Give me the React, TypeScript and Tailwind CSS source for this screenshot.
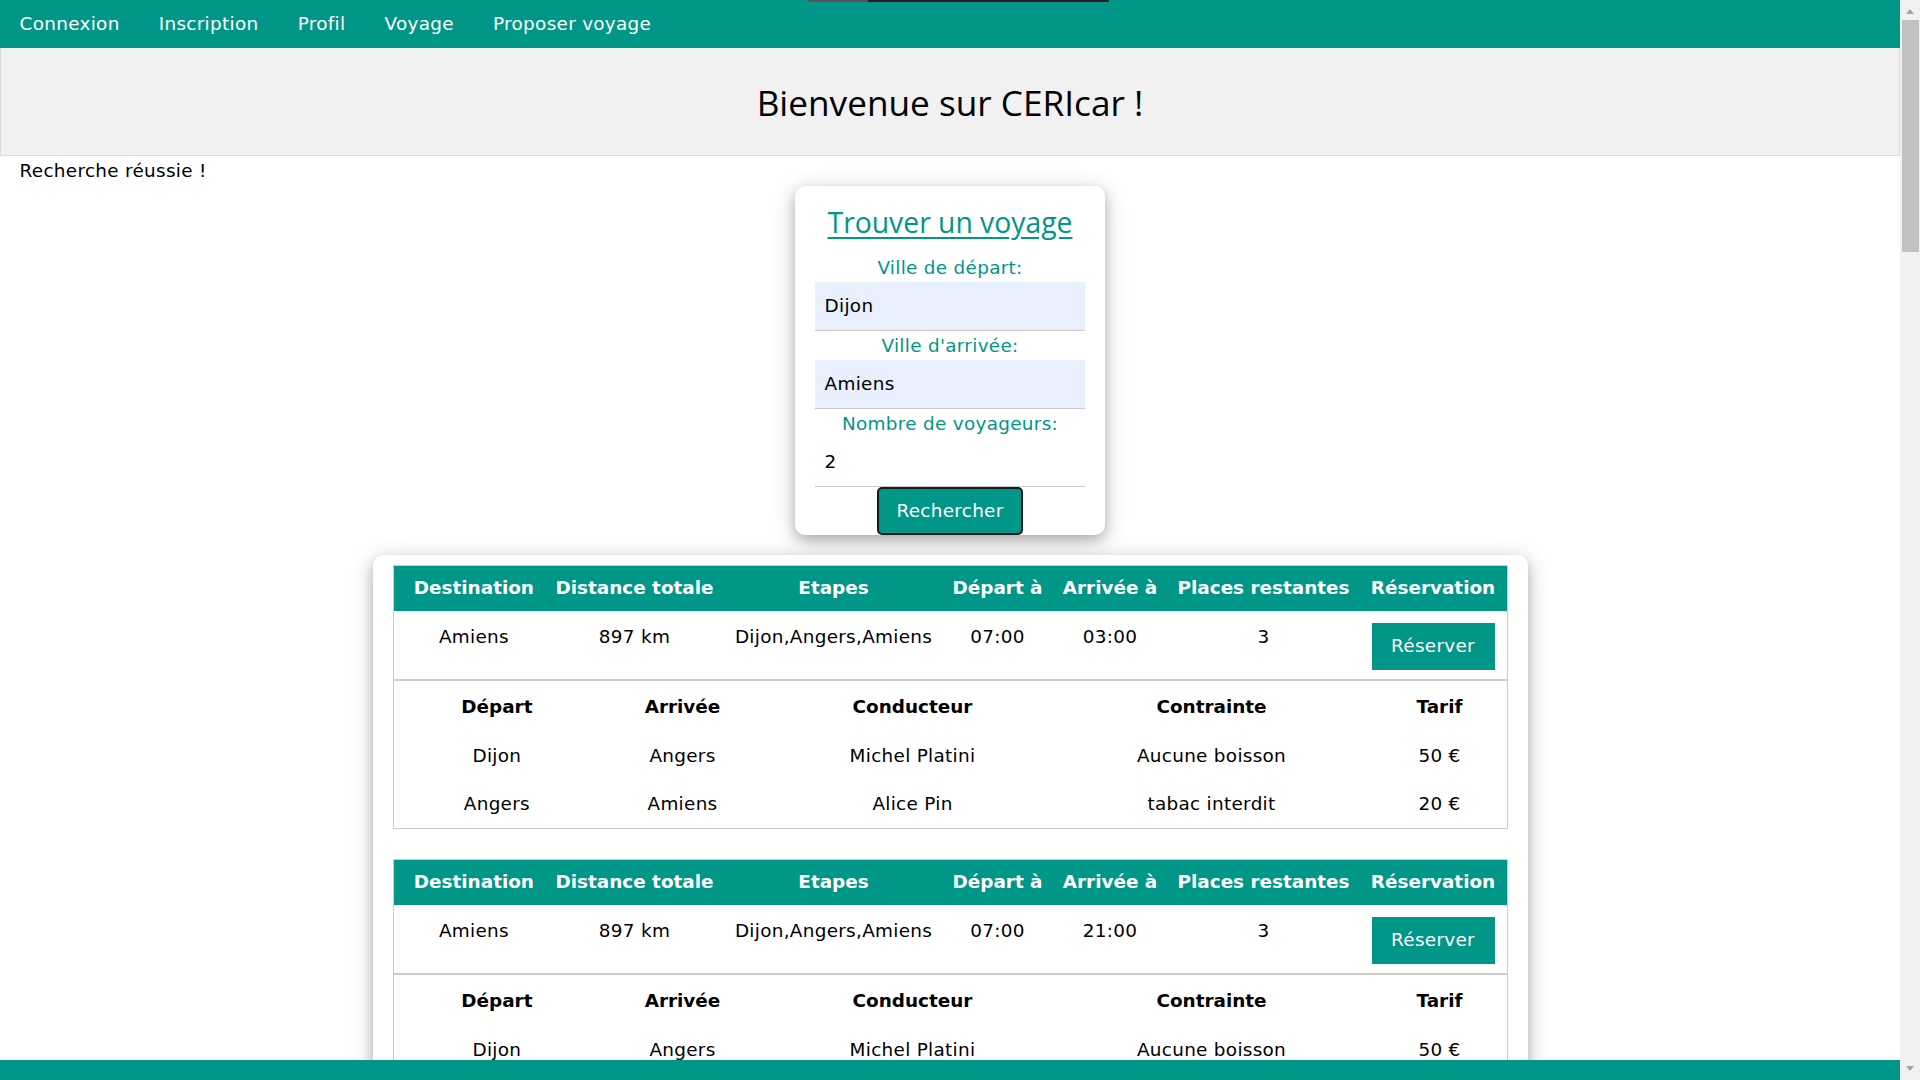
import React from "react";

const NAV = ["Connexion", "Inscription", "Profil", "Voyage", "Proposer voyage"];
const HEADERS = ["Destination", "Distance totale", "Etapes", "Départ à", "Arrivée à", "Places restantes", "Réservation"];
const SUB_HEADERS = ["Départ", "Arrivée", "Conducteur", "Contrainte", "Tarif"];

const LEGS = [
    ["Dijon", "Angers", "Michel Platini", "Aucune boisson", "50 €"],
    ["Angers", "Amiens", "Alice Pin", "tabac interdit", "20 €"],
];

const TRIPS = [
    { id: 1, values: ["Amiens", "897 km", "Dijon,Angers,Amiens", "07:00", "03:00", "3"], legs: LEGS },
    { id: 2, values: ["Amiens", "897 km", "Dijon,Angers,Amiens", "07:00", "21:00", "3"], legs: LEGS },
];

const MAIN_COLS = "grid grid-cols-[151px_180px_218px_110px_115px_192px_147px]";
const SUB_COLS = "grid grid-cols-[197px_184px_276px_322px_134px]";
const CARD_SHADOW = "shadow-[0_5px_12px_0_rgba(0,0,0,0.2),0_5px_24px_0_rgba(0,0,0,0.19)]";

// first cell of each w3 table row has the wider left padding
const cellPad = (i: number) => (i === 0 ? "pl-[19.6px] pr-[9.8px]" : "px-[9.8px]");

function TripTable({ values, legs, className = "" }: { values: string[]; legs: string[][]; className?: string }) {
    return (
        <div className={`border border-[#ccc] ${className}`}>
            <div className={`${MAIN_COLS} h-[45px] items-center bg-[#009688] font-bold tracking-normal text-white`}>
                {HEADERS.map((h, i) => (
                    <div key={h} className={`${cellPad(i)} text-center whitespace-nowrap`}>{h}</div>
                ))}
            </div>
            <div className={`${MAIN_COLS} items-start border-b-2 border-[#ccc]`}>
                {values.map((v, i) => (
                    <div key={i} className={`${cellPad(i)} pt-[12px] text-center whitespace-nowrap`}>{v}</div>
                ))}
                <div className="flex justify-center pt-[12px] pb-[9px]">
                    <button className="h-[47px] w-[123px] bg-[#009688] text-white">Réserver</button>
                </div>
            </div>
            <div className="pt-[2px]">
                <div className={`${SUB_COLS} h-[49px] items-center font-bold tracking-normal`}>
                    {SUB_HEADERS.map((h, i) => (
                        <div key={h} className={`${cellPad(i)} text-center`}>{h}</div>
                    ))}
                </div>
                {legs.map((leg, r) => (
                    <div key={r} className={`${SUB_COLS} h-[48px] items-center`}>
                        {leg.map((v, i) => (
                            <div key={i} className={`${cellPad(i)} text-center whitespace-nowrap`}>{v}</div>
                        ))}
                    </div>
                ))}
            </div>
        </div>
    );
}

function Field({ label, value, filled }: { label: string; value: string; filled?: boolean }) {
    return (
        <>
            <div className="text-center leading-[29.5px] text-[#009688]">{label}</div>
            <div className={`h-[48.5px] border-b border-[#ccc] px-[10px] flex items-center ${filled ? "bg-[#e8f0fe]" : "bg-white"}`}>
                {value}
            </div>
        </>
    );
}

export default function App() {
    return (
        <div className="flex h-[1080px] w-[1920px] overflow-hidden bg-white text-black text-[18.4px] leading-[27.5px] tracking-[0.3px] font-['DejaVu_Sans',Verdana,sans-serif]">
            <div className="flex w-[1900px] flex-col">
                {/* top bar */}
                <nav className="relative flex h-[48px] shrink-0 items-center bg-[#009688] text-white">
                    {NAV.map((n) => (
                        <span key={n} className="px-[19.6px]">{n}</span>
                    ))}
                    <div className="absolute left-[808px] top-0 flex h-[2px] w-[301px]">
                        <div className="w-[60px] bg-[#555]" />
                        <div className="flex-1 bg-[#222]" />
                    </div>
                </nav>

                <div className="flex-1 overflow-hidden">
                    <header className="flex h-[108px] items-center justify-center border border-t-0 border-[#dcdcdc] bg-[#f1f1f1] pt-[2px]">
                        <h2 className="text-[35.2px] leading-none tracking-normal font-['Open_Sans',sans-serif]">Bienvenue sur CERIcar !</h2>
                    </header>

                    <p className="pl-[19.6px] pt-[1px]">Recherche réussie !</p>

                    {/* search form */}
                    <div className={`mx-auto mt-[1px] flex w-[310px] flex-col rounded-[10px] bg-white px-[19.6px] ${CARD_SHADOW}`}>
                        <div className="pt-[14px] pb-[9px] text-center">
                            <span className="text-[28.3px] leading-[44px] tracking-normal text-[#009688] underline underline-offset-[4px] font-['Open_Sans',sans-serif]">
                                Trouver un voyage
                            </span>
                        </div>
                        <Field label="Ville de départ:" value="Dijon" filled />
                        <Field label="Ville d'arrivée:" value="Amiens" filled />
                        <Field label="Nombre de voyageurs:" value="2" />
                        <div className="flex justify-center">
                            <button className="h-[48px] w-[146px] rounded-[5px] border-2 border-[#1a1a1a] bg-[#009688] text-white">
                                Rechercher
                            </button>
                        </div>
                    </div>

                    {/* results */}
                    <div className={`mx-auto mt-[20px] w-[1155px] rounded-[10px] bg-white px-[20px] pt-[10px] pb-[20px] ${CARD_SHADOW}`}>
                        {TRIPS.map((t, i) => (
                            <TripTable key={t.id} values={t.values} legs={t.legs} className={i > 0 ? "mt-[30px]" : ""} />
                        ))}
                    </div>
                </div>

                <footer className="h-[20px] shrink-0 bg-[#009688]" />
            </div>

            {/* scrollbar */}
            <div className="flex w-[20px] flex-col items-center bg-[#f1f1f1]">
                <svg width="10" height="20" viewBox="0 0 10 20" className="shrink-0">
                    <path d="M1 14 L5 9 L9 14 Z" fill="#a3a3a3" />
                </svg>
                <div className="h-[232px] w-[17px] bg-[#c1c1c1]" />
                <div className="flex-1" />
                <svg width="10" height="20" viewBox="0 0 10 20" className="shrink-0">
                    <path d="M1 6 L5 11 L9 6 Z" fill="#a3a3a3" />
                </svg>
            </div>
        </div>
    );
}
